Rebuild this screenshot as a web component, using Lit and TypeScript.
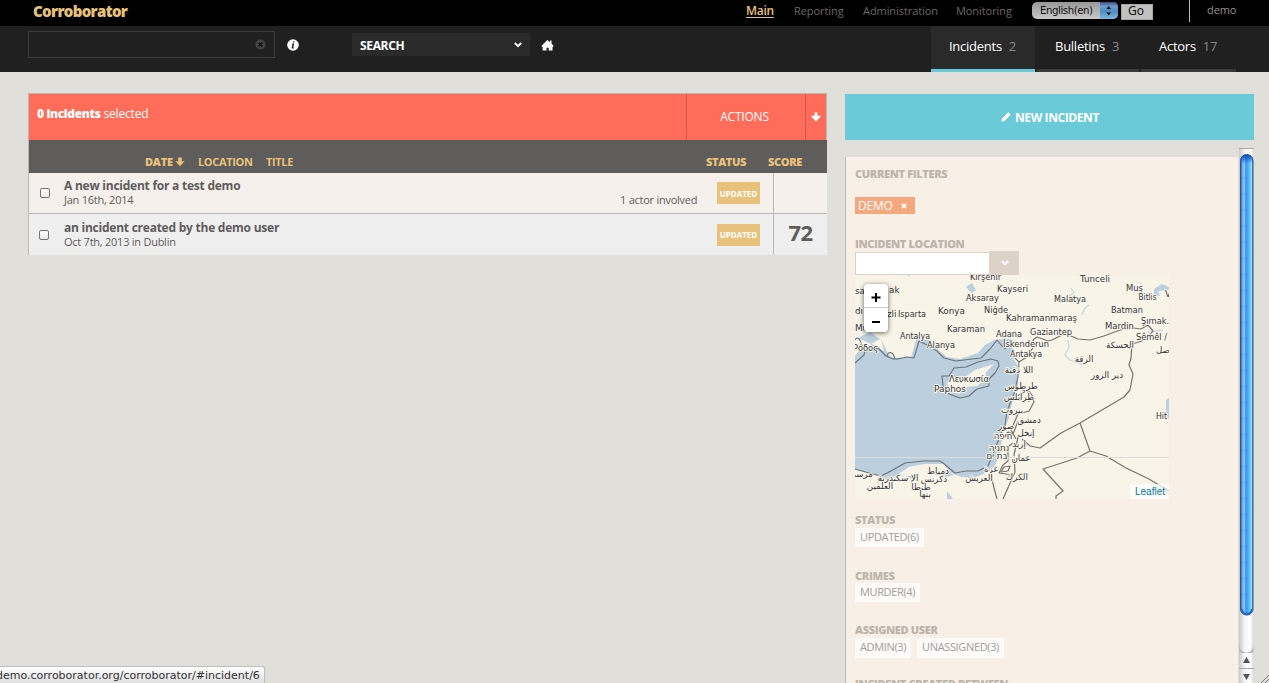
import { LitElement, html, css, svg } from "lit";
import { customElement } from "lit/decorators.js";

type Place = [string, number, number, number?];

const PLACES: Place[] = [
  ["Kırşehir", 970, 280, 31], ["Tunceli", 1080, 281.5, 30], ["Kayseri", 997, 292, 31], ["Muş", 1126, 291, 17],
  ["Aksaray", 966, 301, 33], ["Malatya", 1054, 302, 32], ["Bitlis", 1138.5, 299.5, 18], ["V", 1165, 297],
  ["Isparta", 898, 316.5, 28], ["Konya", 938, 314, 27], ["Niğde", 984, 312.5, 24], ["Batman", 1111, 313, 32],
  ["Kahramanmaraş", 1006, 321, 71], ["Şırnak.", 1141, 324, 28], ["Karaman", 947, 331.5, 38], ["Mardin", 1105, 328.5, 29],
  ["Antalya", 900, 339, 30], ["Adana", 996, 336.5, 26], ["Gaziantep", 1030, 335, 42], ["Sêmêl /", 1136, 340, 31],
  ["Alanya", 927, 348, 28], ["İskenderun", 1003, 347, 46], ["Antakya", 1010, 356.5, 32], ["ak", 889, 293],
  ["sa", 855, 294], ["dı", 855, 314], ["zli", 887, 317], ["Mu", 855, 331], ["Ρόδος", 853, 350.5, 25],
  ["Λευκωσία", 949, 382, 40], ["Paphos", 934, 392, 32], ["Hit", 1156, 419, 11],
];

const RTL_PLACES: Place[] = [
  ["الحسكة", 1120, 348], ["صل", 1163, 353], ["الرقة", 1084, 362], ["دير الزور", 1107, 378], ["اللا ذقية", 1019, 373],
  ["طرطوس", 1021, 389], ["طرابلس", 1019, 400], ["بيروت", 1012, 413], ["دمشق", 1029, 423], ["صور", 1006, 429],
  ["إنخل", 1026, 436], ["חיפה", 1003, 439], ["إربد", 1019, 447], ["נתניה", 999, 451], ["בת ים", 997, 459],
  ["عمان", 1021, 461], ["غزة", 991, 472], ["الكرك", 1017, 480], ["دمياط", 938, 474], ["مرسى", 861, 477],
  ["الإ سكندرية", 898, 480.5], ["دكرنس", 934, 482], ["العريش", 979, 481], ["العلمين", 880, 489], ["طنطا", 921, 489.500], ["بنها", 925, 497],
];

@customElement("region-map")
class RegionMap extends LitElement {
  static styles = css`
    :host { display: block; position: relative; width: 314px; height: 224px; overflow: hidden; }
    svg { display: block; }
    .land { fill: #f8f4e8; }
    .water { fill: #bccfde; }
    .river { fill: none; stroke: #c6d9e4; stroke-width: 1.3; }
    .border { fill: none; stroke: #77736d; stroke-width: 1.2; stroke-linejoin: round; }
    .coast { fill: none; stroke: #69737b; stroke-width: 1.1; stroke-linejoin: round; }
    .seam { stroke: #dcdcd8; stroke-width: 1; }
    text { font: 8.8px "DejaVu Sans", sans-serif; fill: #333; stroke: #fbf8ef; stroke-width: 1.8px; paint-order: stroke; stroke-linejoin: round; }
    .rtl { text-anchor: middle; font-size: 8.7px; }
    .zoom { position: absolute; left: 9px; top: 9px; width: 24px; height: 48px; border-radius: 4px; background: #fff; box-shadow: 0 1px 5px rgba(0,0,0,.6); }
    .zoom svg { width: 24px; height: 48px; }
    .attribution { position: absolute; right: 0; bottom: 0; box-sizing: border-box; width: 39px; height: 15px; padding-left: 5px; background: rgba(255,255,255,.7); color: #0078a8; font: 10px/15px "Liberation Sans", sans-serif; }
  `;
  render() {
    return html`
      <svg width="314" height="224" viewBox="855 275 314 224">
        <rect class="land" x="855" y="275" width="314" height="224"></rect>
        <path class="water" d="M855 356L861 348L872 344L884 351L881 339L888 354L893 358L911 357L917 337L921 339L929 340L938 350L947 357L960 359L978 353L985 345L994 340L1003 339L1010 339L1014 349L1010 354L1018 366L1018 386L1012 402L1009 418L1003 433L1000 452L995 466L986 473L973 478L961 477L949 472L945 464L924 464L909 467L897 475L887 480L873 473L865 472L855 470Z"></path>
        <path class="land" d="M947 383L951 378L965 377L975 370L994 364L986 372L985 380L977 386L966 387L959 394L951 391Z"></path>
        <path class="water" d="M966 287L972 283L976 290L972 293ZM1154 289L1162 284L1169 287V290L1158 291L1160 296L1154 295ZM1166 400L1169 398V419L1166 415ZM905 477L920 474L914 479ZM934 475L945 470L954 475L946 477ZM947 491L953 499H947ZM858 338L870 332L880 339L871 344ZM1164 487L1169 493V498Z"></path>
        <path class="river" d="M1068 340L1069 347L1065 355L1070 360L1076 362L1083 365M1069 296L1074 293L1071 288M1082 315L1085 308L1089 305M1148 332L1163 330M908 275L910 276"></path>
        <path class="coast" d="M855 363L864 355L865 351L878 348L886 356L893 359L898 359L907 357L914 358L917 348L919 341L929 346L937 351L944 358L956 361L972 359L981 358L990 349L997 340L1002 346L1006 349"></path>
        <path class="coast" d="M887 356C888 351 893 351 895 359M855 340C858 335 860 340 863 347M855 469L869 473L881 476L891 471L905 463L923 461L940 461L943 463L955 473L966 471L978 471L988 466L991 459L997 444L1001 433L1005 425L1007 411L1014 394L1018 377L1019 362L1013 356"></path>
        <path class="coast" d="M954 368L966 367L978 362L991 359L998 361L999 366L995 373L989 379L989 386L977 389L969 396L960 398L949 394L943 386L942 376L949 376Z"></path>
        <path class="border" d="M1019 362L1027 357L1034 346L1033 340L1037 337L1048 341L1052 340L1064 334L1071 336L1078 339L1090 340L1104 336L1120 330L1133 328L1141 329L1148 325L1153 331L1149 336L1142 341L1132 344L1131 358L1129 365L1133 374L1130 390L1124 397L1080 423L1061 433L1054 438L1040 448L1030 446L1022 439"></path>
        <path class="border" d="M1080 423L1090 451L1077 458L1043 469L1063 491L1056 496V499M1090 451L1106 456L1126 468L1149 479L1169 491M1017 396L1028 390L1032 395L1034 402L1029 411L1018 414L1011 430L1016 439M991 471L993 484L997 499M1018 437L1014 455L1015 472L1003 499M1013 475L999 473L1003 465L1008 461L1008 447L1013 443"></path>
        <path class="border" d="M1029 402L1028 392L1018 388M1004 436L1008 432L1013 434L1018 421M1004 467L1010 466L1008 471L1001 472Z"></path>
        <path class="seam" d="M855 457.5H1169"></path>
        ${PLACES.map(([name, x, y, w]) => w
          ? svg`<text x=${x} y=${y} textLength=${w} lengthAdjust="spacingAndGlyphs">${name}</text>`
          : svg`<text x=${x} y=${y}>${name}</text>`)}
        ${RTL_PLACES.map(([name, x, y]) => svg`<text class="rtl" x=${x} y=${y}>${name}</text>`)}
      </svg>
      <div class="zoom"><svg viewBox="0 0 24 48"><path d="M0 23.5H24" stroke="#ccc"/><path d="M7.5 13.5H16.5M12 9V18M8 38H16" stroke="#000" stroke-width="1.9" fill="none"/></svg></div>
      <div class="attribution">Leaflet</div>`;
  }
}

const FILTER_GROUPS = [
  { key: "status", title: "Status", chips: ["UPDATED(6)"] },
  { key: "crimes", title: "Crimes", chips: ["MURDER(4)"] },
  { key: "user", title: "Assigned user", chips: ["ADMIN(3)", "UNASSIGNED(3)"] },
];

const INCIDENTS = [
  { title: "A new incident for a test demo", meta: "Jan 16th, 2014", actors: "1 actor involved", score: "", cls: "first" },
  { title: "an incident created by the demo user", meta: "Oct 7th, 2013 in Dublin", actors: "", score: "72", cls: "second" },
];

const chevron = html`<svg class="chevron" width="8" height="6" viewBox="0 0 8 6"><path d="M.8 1L4 4.2L7.2 1" fill="none" stroke="currentColor" stroke-width="1.9"/></svg>`;
const arrowDown = html`<svg width="10" height="10" viewBox="0 0 10 10"><path d="M3.6 .5H6.4V4H7.4L8.4 3.2L9.7 4.6L5 9.5L.3 4.6L1.6 3.2L2.6 4H3.6Z" fill="currentColor"/></svg>`;
const blockArrow = html`<svg width="10" height="10" viewBox="0 0 10 10"><path d="M3.200 .5H6.800V4.200H9.600L5 9.200L.4 4.200H3.200Z" fill="currentColor"/></svg>`;

@customElement("app-root")
class AppRoot extends LitElement {
  static styles = css`
    :host { display: flex; flex-direction: column; position: relative; width: 1269px; height: 683px; overflow: hidden; background: #e0dfda; color: #5f5c5c; font-family: "Open Sans", sans-serif; font-size: 12px; }
    * { box-sizing: border-box; white-space: nowrap; }
    svg { display: block; flex: none; }
    .top { flex: none; display: flex; height: 26px; background: #000; padding-left: 33px; }
    .brand { width: 713px; font-size: 15px; line-height: 22px; font-weight: 800; color: #e8c27a; letter-spacing: -.65px; }
    .nav { display: flex; width: 286px; color: #6b6864; font-size: 11px; font-weight: 500; line-height: 22px; letter-spacing: -.07px; }
    .nav span { flex: none; }
    .nav .main { width: 48px; color: #e8c27a; font-size: 12px; font-weight: 600; text-decoration: underline; text-underline-offset: 2px; letter-spacing: -.3px; }
    .reporting { width: 69px; } .administration { width: 93px; }
    .language { display: flex; width: 86px; height: 17px; margin-top: 2px; border-radius: 5px; overflow: hidden; background: linear-gradient(#989898, #c9c9c9); color: #111; font: 10.2px/17px "DejaVu Sans", sans-serif; padding-left: 8px; letter-spacing: -.45px; justify-content: space-between; }
    .stepper { width: 18px; height: 17px; background: linear-gradient(#3c4a86 0, #6f9dca 25%, #4b8dc4 55%, #7eb8dc); }
    .go { width: 32px; height: 16px; margin: 4px 0 0 3px; background: #c0c0c0; border: 1px solid #a9a7a3; color: #000; text-align: center; font-size: 12px; line-height: 12px; padding-right: 2px; }
    .rule { width: 1px; height: 22px; margin-left: 36px; background: #bbb; }
    .account { margin-left: 17px; font-size: 11px; line-height: 20px; color: #96928e; letter-spacing: -.1px; }
    .toolbar { flex: none; display: flex; height: 46px; background: #202020; padding-left: 28px; color: #fff; }
    .query { display: flex; justify-content: flex-end; width: 247px; height: 27px; margin-top: 5px; border: 1px solid #3c3c3c; padding: 7px 8px; }
    .info { margin: 13px 0 0 12px; }
    .saved { display: flex; justify-content: space-between; align-items: center; width: 178px; height: 23px; margin: 7px 0 0 53px; padding: 1px 8px 0; background: #2a2a2a; font-weight: 700; font-size: 12px; letter-spacing: -.35px; }
    .home { margin: 14px 0 0 11px; }
    .tabs { display: flex; gap: 2px; margin-left: 377px; }
    .tab { height: 46px; border-bottom: 3px solid #393939; font-size: 13px; line-height: 40px; padding-left: 18px; letter-spacing: -.26px; font-weight: 500; }
    .tab .count { color: #8b8883; margin-left: 7px; }
    .incidents { width: 104px; background: #2a2a2a; border-color: #67c8d7; }
    .bulletins { width: 102px; } .actors { width: 95px; }
    .content { display: flex; flex: 1; min-height: 0; padding: 21px 15px 0 28px; gap: 18px; }
    .list { width: 799px; border-left: 1px solid #b9b9b1; height: 162px; }
    .selection { display: flex; height: 47px; background: #ff6d5a; color: #fff; border-top: 1px solid #b9b9b1; border-right: 1px solid #b9b9b1; }
    .selected { flex: 1; padding-left: 8px; line-height: 39px; font-size: 12px; letter-spacing: -.17px; }
    .selected b { font-weight: 800; letter-spacing: -.35px; }
    .actions { width: 119px; border-left: 1px solid #d1594c; line-height: 45px; text-align: center; font-size: 12px; letter-spacing: -.2px; padding-right: 3px; }
    .more { width: 21px; border-left: 1px solid #d1594c; padding: 18px 0 0 5px; }
    .head { display: flex; height: 33px; background: #5f5c5c; color: #e8c27a; font-weight: 700; font-size: 11px; line-height: 44px; padding-left: 116px; letter-spacing: -.35px; }
    .date { display: flex; width: 53px; font-weight: 800; letter-spacing: -.2px; } .date svg { margin: 17px 0 0 2px; }
    .place { width: 68px; } .name { width: 440px; } .state { width: 62px; }
    .state, .points { font-weight: 800; letter-spacing: -.35px; }
    .row { display: flex; height: 41px; background: #f5f0eb; border-bottom: 1px solid #b9b9b1; }
    .row.second { background: #efefef; border-bottom: 0; }
    .check { width: 35px; padding: 15px 0 0 11px; }
    .second .check { padding-left: 10px; padding-top: 16px; }
    .check i { display: block; width: 10px; height: 10px; border: 1px solid #77736f; border-radius: 2px; background: linear-gradient(#fff, #eaeaea); }
    .summary { flex: 1; padding-top: 5px; }
    .title { height: 15px; line-height: 16px; font-weight: 700; font-size: 12px; letter-spacing: -.24px; }
    .second .title, .second .meta { transform: translateY(1px); }
    .meta { line-height: 14px; font-size: 11px; letter-spacing: -.25px; }
    .involved { width: 97px; padding-top: 20px; line-height: 14px; font-size: 11px; letter-spacing: -.25px; }
    .badge { width: 43px; height: 22px; margin: 9px 13px 0 0; background: #e8c27a; color: #fff; text-align: center; font-weight: 700; font-size: 8px; line-height: 23px; }
    .second .badge { margin-top: 10px; line-height: 22px; }
    .score { width: 54px; border-left: 1px solid #b9b9b1; text-align: center; font-size: 22px; font-weight: 700; line-height: 37px; letter-spacing: -.5px; }
    .side { display: flex; flex-direction: column; width: 409px; min-height: 0; padding-top: 1px; }
    .create { flex: none; display: flex; justify-content: center; align-items: center; gap: 4px; height: 46px; background: #6acad8; color: #fff; font-weight: 700; font-size: 12px; letter-spacing: -.4px; padding-left: 1px; }
    .pane { display: flex; height: 535px; margin-top: 8px; }
    .filters { width: 393px; height: 526px; margin-top: 9px; overflow: hidden; padding: 9px 0 0 9px; background: #f8f0e6; border-left: 1px solid #bab9b2; }
    .heading { height: 16px; line-height: 16px; font-size: 11px; font-weight: 800; text-transform: uppercase; color: #bdb5ab; letter-spacing: -.34px; }
    .tag { display: flex; align-items: center; width: 60px; height: 17px; margin: 15px 0 22px; background: #f5a77e; color: #fff; font-size: 12px; padding-left: 3px; letter-spacing: -.2px; }
    .tag svg { margin: 1px 0 0 8px; }
    .combo { display: flex; height: 23px; align-items: flex-end; }
    .field { width: 135px; height: 23px; border: 1px solid #dcd2c8; background: #fff; }
    .drop { width: 29px; height: 24px; background: #dcd2c8; color: #fff; padding: 9px 0 0 11px; }
    .status { margin-top: 13px; } .crimes { margin-top: 21px; } .user { margin-top: 20px; } .created { margin-top: 18px; }
    .chips { display: flex; gap: 6px; }
    .chip { height: 19px; background: #fcfbf9; color: #a19d99; font-size: 11px; line-height: 18px; padding: 0 5px; letter-spacing: -.36px; }
    .crimes .chips { margin: -1px 0 1px; }
    .user .chip { height: 20px; }
    .url { position: absolute; left: 0; bottom: 0; width: 265px; height: 17px; border: 1px solid #bebebb; border-width: 1px 1px 0 0; border-radius: 0 3px 0 0; background: linear-gradient(#fff, #dedede); color: #333; font: 11px/18px "DejaVu Sans", sans-serif; overflow: hidden; }
    .url span { margin-left: -4px; }
    .grip { position: absolute; right: 0; bottom: 0; }
  `;
  render() {
    return html`
      <header class="top">
        <div class="brand">Corroborator</div>
        <nav class="nav"><span class="main">Main</span><span class="reporting">Reporting</span><span class="administration">Administration</span><span>Monitoring</span></nav>
        <div class="language">English(en)<svg class="stepper" viewBox="0 0 18 17"><path d="M6.5 7L8.7 4L11 7ZM6.5 10.5L8.7 13.5L11 10.5Z" fill="#111"/></svg></div>
        <div class="go">Go</div><i class="rule"></i><div class="account">demo</div>
      </header>
      <div class="toolbar">
        <div class="query"><svg width="11" height="11" viewBox="0 0 11 11"><circle cx="5.5" cy="5.5" r="5" fill="#444"/><path d="M3.6 3.6L7.4 7.4M7.4 3.6L3.6 7.4" stroke="#111" stroke-width="1.6"/></svg></div>
        <svg class="info" width="12" height="12" viewBox="0 0 12 12"><circle cx="6" cy="6" r="5.8" fill="#fff"/><path d="M6.3 2.2H7.5L7.2 3.6H6ZM5 4.5H7.1L6.3 8.5H7L6.8 9.4H4.6L5.4 5.3H4.8Z" fill="#222"/></svg>
        <div class="saved">SEARCH ${chevron}</div>
        <svg class="home" width="13" height="11" viewBox="0 0 13 11"><path d="M6.3 0L9 2.2V.6H10.5V3.6L12.7 6L11.5 7V10.6H7.7V7.7H5.5V10.6H1.6V7L.2 6.2Z" fill="#fff"/></svg>
        <div class="tabs"><div class="tab incidents">Incidents<span class="count">2</span></div><div class="tab bulletins">Bulletins<span class="count">3</span></div><div class="tab actors">Actors<span class="count">17</span></div></div>
      </div>
      <main class="content">
        <section class="list">
          <div class="selection"><div class="selected"><b>0 incidents</b> selected</div><div class="actions">ACTIONS</div><div class="more">${arrowDown}</div></div>
          <div class="head"><div class="date">DATE ${blockArrow}</div><div class="place">LOCATION</div><div class="name">TITLE</div><div class="state">STATUS</div><div class="points">SCORE</div></div>
          ${INCIDENTS.map(i => html`<div class="row ${i.cls}"><div class="check"><i></i></div><div class="summary"><div class="title">${i.title}</div><div class="meta">${i.meta}</div></div><div class="involved">${i.actors}</div><div class="badge">UPDATED</div><div class="score">${i.score}</div></div>`)}
        </section>
        <aside class="side">
          <div class="create"><svg width="10" height="10" viewBox="0 0 10 10"><path d="M7.2 .3L9.8 2.6L3.5 9.1L.3 9.8L.9 6.7Z" fill="#fff"/></svg>NEW INCIDENT</div>
          <div class="pane">
            <div class="filters">
              <div class="heading">Current filters</div>
              <div class="tag">DEMO<svg width="6" height="6" viewBox="0 0 6 6"><path d="M.8 .8L5.2 5.2M5.2 .8L.8 5.2" stroke="#fff" stroke-width="1.7"/></svg></div>
              <div class="heading">Incident location</div>
              <div class="combo"><div class="field"></div><div class="drop">${chevron}</div></div>
              <region-map></region-map>
              ${FILTER_GROUPS.map(g => html`<div class=${g.key}><div class="heading">${g.title}</div><div class="chips">${g.chips.map(c => html`<span class="chip">${c}</span>`)}</div></div>`)}
              <div class="heading created">Incident created between</div>
            </div>
            <svg width="16" height="535" viewBox="1238 148 16 535">
              <defs>
                <linearGradient id="track"><stop offset="0" stop-color="#c8c8c8"/><stop offset=".35" stop-color="#f3f3f3"/><stop offset=".75" stop-color="#fff"/><stop offset="1" stop-color="#d8d8d8"/></linearGradient>
                <linearGradient id="thumb"><stop offset="0" stop-color="#0a3fba"/><stop offset=".12" stop-color="#6aa8ec"/><stop offset=".34" stop-color="#93c4f2"/><stop offset=".42" stop-color="#2f94ee"/><stop offset=".75" stop-color="#65c4fc"/><stop offset=".9" stop-color="#8fe2ff"/><stop offset="1" stop-color="#2b64a0"/></linearGradient>
                <linearGradient id="tip" x2="0" y2="1"><stop offset="0" stop-color="#0a47c4"/><stop offset="1" stop-color="#0a47c4" stop-opacity="0"/></linearGradient>
                <pattern id="ripple" width="16" height="16" patternUnits="userSpaceOnUse"><path d="M8 2H16M8 3H16" stroke="#1c86ea" stroke-opacity=".2" stroke-width="1"/></pattern>
              </defs>
              <rect x="1239" y="148" width="15" height="535" fill="url(#track)"/>
              <path d="M1239 148.5H1254" stroke="#aaa"/>
              <path d="M1239.5 645C1240 655 1253 655 1253.500 645V652C1253 653 1250 653 1246.500 653C1242 653 1240 653 1239.500 652Z" fill="#b5b5b5"/>
              <rect x="1240.500" y="154.500" width="12.500" height="460.500" rx="6" fill="url(#thumb)" stroke="#36547a"/>
              <rect x="1241" y="158" width="12" height="450" fill="url(#ripple)"/>
              <path d="M1241 163V160Q1241 155 1246.700 155Q1252.500 155 1252.500 160V163Z" fill="url(#tip)"/>
              <path d="M1241.500 609Q1243 614 1247 614Q1251 614 1252 609" fill="none" stroke="#1763d0" stroke-width="1.5"/>
              <path d="M1239 668.500H1254" stroke="#aaa"/>
              <path d="M1243 663L1246.500 657L1250 663ZM1243 674L1246.500 680L1250 674Z" fill="#555"/>
            </svg>
          </div>
        </aside>
      </main>
      <div class="url"><span>demo.corroborator.org/corroborator/#incident/6</span></div>
      <svg class="grip" width="9" height="9" viewBox="0 0 9 9"><path d="M1 9L9 1M5 9L9 5" stroke="#777" fill="none"/></svg>`;
  }
}
